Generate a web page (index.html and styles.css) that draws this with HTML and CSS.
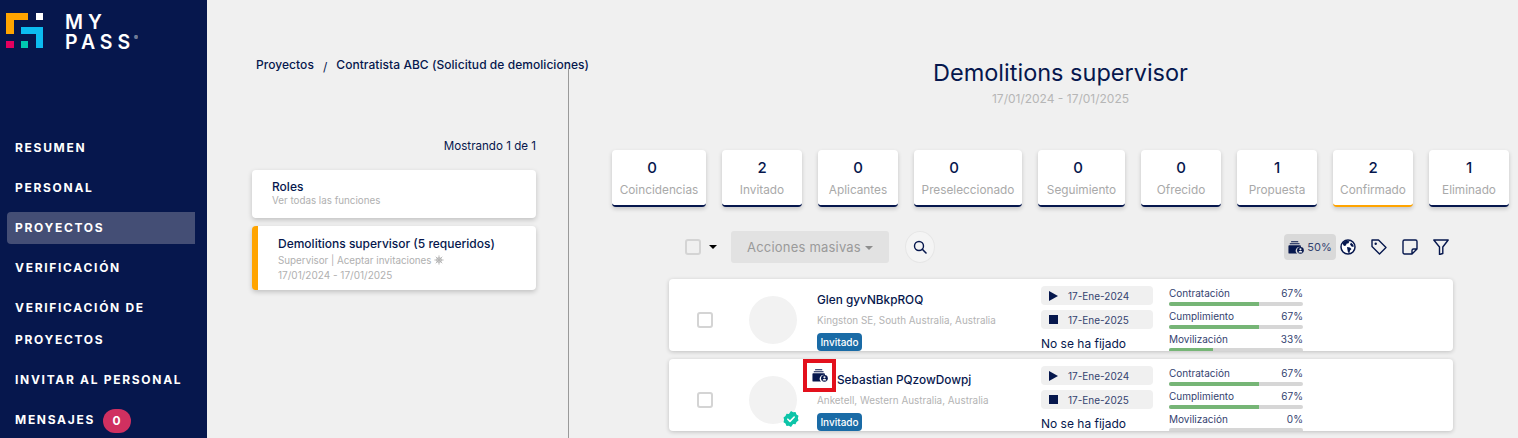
FILE: index.html
```html
<!DOCTYPE html>
<html lang="es">
<head>
<meta charset="utf-8">
<title>MyPass</title>
<link rel="stylesheet" href="styles.css">
</head>
<body>
<svg class="defs" width="0" height="0" aria-hidden="true">
  <symbol id="wallet" viewBox="0 0 18 14">
    <path d="M3.500 0h8v1.200h-8zM2 2.200h11v1.200H2z" fill="#06174d"/>
    <path d="M0.500 5.400a1 1 0 0 1 1-1h12a1 1 0 0 1 1 1v1.300a4.200 4.200 0 0 0-4.300 7.100H1.500a1 1 0 0 1-1-1z" fill="#06174d"/>
    <circle cx="14" cy="10.200" r="3.800" fill="#06174d"/>
    <circle cx="14" cy="9" r="1.200" fill="#f0f0f0"/>
    <path d="M11.800 12.700a2.200 2 0 0 1 4.400 0z" fill="#f0f0f0"/>
  </symbol>
</svg>
<div class="app">
  <aside class="sidebar">
    <div class="brand">
      <svg class="logo" viewBox="0 0 37 35" aria-hidden="true">
        <path d="M0 0h22v7H8v14H0z" fill="#ffa400"/>
        <rect x="30" y="0" width="7" height="7" fill="#fff"/>
        <path d="M15 14h22v21h-7V21H15z" fill="#0cbcf0"/>
        <rect x="0" y="28" width="8" height="7" fill="#e4005f"/>
        <rect x="15" y="28" width="7" height="7" fill="#00c9b1"/>
      </svg>
      <div class="wordmark"><span>MY</span><span>PASS<sup>®</sup></span></div>
    </div>
    <nav class="nav">
      <a class="nav-item">RESUMEN</a>
      <a class="nav-item">PERSONAL</a>
      <a class="nav-item active">PROYECTOS</a>
      <a class="nav-item">VERIFICACIÓN</a>
      <a class="nav-item">VERIFICACIÓN DE<br>PROYECTOS</a>
      <a class="nav-item">INVITAR AL PERSONAL</a>
      <a class="nav-item">MENSAJES <span class="count">0</span></a>
    </nav>
  </aside>

  <main class="content">
    <section class="left">
      <div class="crumbs"><span>Proyectos</span><span class="sep">/</span><span>Contratista ABC (Solicitud de demoliciones)</span></div>
      <div class="left-body">
        <p class="showing">Mostrando 1 de 1</p>
        <div class="role-card roles">
          <h3>Roles</h3>
          <p>Ver todas las funciones</p>
        </div>
        <div class="role-card selected">
          <h3>Demolitions supervisor (5 requeridos)</h3>
          <p class="meta">Supervisor | Aceptar invitaciones
            <svg class="gear" viewBox="0 0 12 12" aria-hidden="true"><circle cx="6" cy="6" r="2.600" fill="none" stroke="#b5b5b5" stroke-width="1.400"/><path d="M6 0.500v11M0.500 6h11M2.100 2.100l7.800 7.800M9.900 2.100l-7.800 7.800" stroke="#b5b5b5" stroke-width="1.100"/></svg>
          </p>
          <p>17/01/2024 - 17/01/2025</p>
        </div>
      </div>
    </section>

    <section class="right">
      <header class="head">
        <h1>Demolitions supervisor</h1>
        <p>17/01/2024 - 17/01/2025</p>
      </header>

      <div class="stats">
        <div class="stat"><b>0</b><span>Coincidencias</span></div>
        <div class="stat"><b>2</b><span>Invitado</span></div>
        <div class="stat"><b>0</b><span>Aplicantes</span></div>
        <div class="stat"><b>0</b><span>Preseleccionado</span></div>
        <div class="stat"><b>0</b><span>Seguimiento</span></div>
        <div class="stat"><b>0</b><span>Ofrecido</span></div>
        <div class="stat"><b>1</b><span>Propuesta</span></div>
        <div class="stat current"><b>2</b><span>Confirmado</span></div>
        <div class="stat"><b>1</b><span>Eliminado</span></div>
      </div>

      <div class="toolbar">
        <span class="check"></span>
        <span class="caret dark"></span>
        <div class="bulk">Acciones masivas<span class="caret grey"></span></div>
        <div class="search">
          <svg viewBox="0 0 14 14" aria-hidden="true"><circle cx="6" cy="6" r="4.500" fill="none" stroke="#06174d" stroke-width="1.400"/><path d="M9.300 9.300L13 13" stroke="#06174d" stroke-width="1.600" stroke-linecap="round"/></svg>
        </div>
        <div class="tools">
          <div class="pct"><svg class="wallet"><use href="#wallet"/></svg>50%</div>
          <svg class="tool" viewBox="0 0 16 16" aria-hidden="true"><circle cx="8" cy="8" r="7" fill="#fff" stroke="#06174d" stroke-width="1.500"/><path d="M3 3.500l3-1.800 3.500.5-1 2-2 .5-.5 1.800-2 .5-1-1.500zM7 8l3 .5 1.500 1.500-1.500 1.500-.5 2.500-1.500-.5-.5-2.500zM11 3.500l2.500 2.500v2l-2-.5-1.500-2z" fill="#06174d"/></svg>
          <svg class="tool" viewBox="0 0 16 16" aria-hidden="true"><path d="M1 1h6.500L15 8.500 8.500 15 1 7.500z" fill="none" stroke="#06174d" stroke-width="1.400" stroke-linejoin="round"/><circle cx="4.700" cy="4.700" r="1.200" fill="#06174d"/></svg>
          <svg class="tool" viewBox="0 0 16 16" aria-hidden="true"><path d="M10 15H2.500A1.500 1.500 0 0 1 1 13.500v-11A1.500 1.500 0 0 1 2.500 1h11A1.500 1.500 0 0 1 15 2.500V10zM10 15v-3.500a1.500 1.500 0 0 1 1.500-1.500H15" fill="none" stroke="#06174d" stroke-width="1.400" stroke-linejoin="round"/></svg>
          <svg class="tool" viewBox="0 0 16 16" aria-hidden="true"><path d="M0.800 1h14.400L9.800 8v6.500l-3.300 1V8z" fill="none" stroke="#06174d" stroke-width="1.400" stroke-linejoin="round"/></svg>
        </div>
      </div>

      <div class="rows">
        <article class="row">
          <span class="check"></span>
          <div class="avatar"></div>
          <div class="who">
            <h4>Glen gyvNBkpROQ</h4>
            <p>Kingston SE, South Australia, Australia</p>
            <span class="badge">Invitado</span>
          </div>
          <div class="dates">
            <div class="date"><i class="play"></i>17-Ene-2024</div>
            <div class="date"><i class="stop"></i>17-Ene-2025</div>
            <div class="unset">No se ha fijado</div>
          </div>
          <div class="bars">
            <div class="metric"><div class="metric-top"><span>Contratación</span><span>67%</span></div><div class="track"><div class="fill" style="width:67%"></div></div></div>
            <div class="metric"><div class="metric-top"><span>Cumplimiento</span><span>67%</span></div><div class="track"><div class="fill" style="width:67%"></div></div></div>
            <div class="metric"><div class="metric-top"><span>Movilización</span><span>33%</span></div><div class="track"><div class="fill" style="width:33%"></div></div></div>
          </div>
        </article>

        <article class="row">
          <span class="check"></span>
          <div class="avatar">
            <svg class="verified" viewBox="0 0 16 16" aria-hidden="true"><path d="M8 0l2.100 1.300 2.400-.2 1 2.300 2 1.400-.6 2.400.6 2.400-2 1.400-1 2.300-2.400-.2L8 16l-2.100-1.300-2.400.2-1-2.300-2-1.400.6-2.400L.5 6.400l2-1.400 1-2.300 2.400.2z" fill="#0cc4a8"/><path d="M4.800 8.200l2.200 2.200 4.200-4.400" fill="none" stroke="#fff" stroke-width="1.600" stroke-linecap="round" stroke-linejoin="round"/></svg>
          </div>
          <div class="who">
            <h4 class="flagged"><span class="marker"><svg class="wallet"><use href="#wallet"/></svg></span>Sebastian PQzowDowpj</h4>
            <p>Anketell, Western Australia, Australia</p>
            <span class="badge">Invitado</span>
          </div>
          <div class="dates">
            <div class="date"><i class="play"></i>17-Ene-2024</div>
            <div class="date"><i class="stop"></i>17-Ene-2025</div>
            <div class="unset">No se ha fijado</div>
          </div>
          <div class="bars">
            <div class="metric"><div class="metric-top"><span>Contratación</span><span>67%</span></div><div class="track"><div class="fill" style="width:67%"></div></div></div>
            <div class="metric"><div class="metric-top"><span>Cumplimiento</span><span>67%</span></div><div class="track"><div class="fill" style="width:67%"></div></div></div>
            <div class="metric"><div class="metric-top"><span>Movilización</span><span>0%</span></div><div class="track"><div class="fill" style="width:0%"></div></div></div>
          </div>
        </article>
      </div>
    </section>
  </main>
</div>
</body>
</html>
```

FILE: styles.css
```css
* { box-sizing: border-box; }
html, body { margin: 0; height: 438px; overflow: hidden; }
body { font-family: Inter, "Noto Sans", sans-serif; color: #06174d; background: #f0f0f0; }
h1, h3, h4, p { margin: 0; font-weight: 400; }
.defs { position: absolute; }

.app { display: flex; height: 438px; }

/* Sidebar */
.sidebar { width: 207px; flex: none; background: #06174d; padding: 13px 0 0 7px; color: #fff; }
.brand { display: flex; align-items: flex-start; margin-left: -1px; height: 119px; }
.logo { width: 37px; height: 35px; display: block; }
.wordmark { display: flex; flex-direction: column; margin: -1px 0 0 22px; font-size: 19.500px; line-height: 20px; font-weight: 600; letter-spacing: 4.900px; }
.wordmark sup { font-size: 6px; letter-spacing: 0; vertical-align: 9px; line-height: 0; opacity: .7; margin-left: -1px; }
.nav { display: flex; flex-direction: column; gap: 8px; }
.nav-item { width: 188px; padding: 0 8px; font-size: 12px; line-height: 32px; font-weight: 700; letter-spacing: 1.7px; white-space: nowrap; border-radius: 4px 0 0 4px; }
.nav-item.active { background: #444e75; }
.count { display: inline-block; width: 28px; height: 24px; margin-left: 3px; border-radius: 12px; background: #d03060; font-size: 12px; line-height: 24px; letter-spacing: 0; text-align: center; vertical-align: middle; }

/* Main */
.content { flex: 1; display: flex; min-width: 0; }
.left { width: 362px; flex: none; padding-top: 58px; }
.crumbs { height: 10px; padding-left: 49px; display: flex; font-size: 12px; line-height: 14px; font-weight: 500; letter-spacing: .05px; white-space: nowrap; }
.sep { margin: 0 9px; font-weight: 400; position: relative; top: 2px; }
.left-body { height: 370px; border-right: 1px solid #9a9a9a; padding: 70px 32px 0 45px; }
.showing { text-align: right; font-size: 11.600px; line-height: 16px; margin-bottom: 16px; }
.role-card { background: #fff; border-radius: 4px; box-shadow: 0 2px 5px rgba(0,0,0,.2); margin-bottom: 8px; }
.role-card h3 { font-size: 12px; line-height: 14px; font-weight: 500; }
.role-card p { font-size: 10px; line-height: 14px; color: #b0b0b0; }
.roles { height: 48px; padding: 10px 20px; }
.roles p { line-height: 13px; font-size: 9.800px; }
.selected { height: 64px; padding: 10px 20px; border-left: 6px solid #ffa400; }
.selected h3 { line-height: 16px; margin-bottom: 2px; }
.selected .meta { font-size: 9.800px; }
.gear { width: 10px; height: 10px; vertical-align: -1px; }

.right { flex: 1; min-width: 0; padding: 58px 9px 0 43px; }
.head { text-align: center; height: 92px; }
.head h1 { font-size: 23.500px; line-height: 30px; }
.head p { font-size: 12px; line-height: 14px; color: #b6b6b6; margin-top: 4px; }

.stats { display: grid; grid-template-columns: 94px 80px 80px 108px 87px 80px 80px 80px 80px; gap: 16px; }
.stat { height: 57px; background: #fff; border-radius: 4px; border-bottom: 2px solid #06174d; box-shadow: 0 2px 4px rgba(0,0,0,.18); display: flex; flex-direction: column; align-items: center; padding-top: 9px; }
.stat b { align-self: flex-start; width: 80px; text-align: center; font-size: 15px; line-height: 18px; font-weight: 500; }
.stat span { font-size: 11.800px; line-height: 16px; margin-top: 5px; color: #a9a9a9; white-space: nowrap; }
.stat.current { border-bottom-color: #ffa400; }

.check { display: block; width: 16px; height: 16px; flex: none; border: 2px solid #d4d4d4; border-radius: 3px; background: #f0f0f0; }
.caret { display: inline-block; border: 4px solid transparent; border-top-color: currentColor; border-bottom: 0; }
.caret.dark { color: #000; margin-left: 8px; }
.caret.grey { color: #8e8e8e; margin-left: 4px; vertical-align: 2px; }

.toolbar { display: flex; align-items: center; height: 32px; margin: 24px 60px 0 73px; }
.bulk { margin-left: 14px; width: 158px; height: 32px; background: #e2e2e2; border-radius: 3px; font-size: 13px; line-height: 32px; text-align: center; color: #9a9a9a; letter-spacing: .2px; }
.search { margin-left: 16px; width: 30px; height: 32px; border-radius: 50%; background: #f4f4f4; border: 1px solid #e6e6e6; display: flex; align-items: center; justify-content: center; }
.search svg { width: 14px; height: 14px; }
.tools { margin-left: auto; display: flex; align-items: center; gap: 15px; }
.pct { width: 52px; height: 26px; margin-right: -11px; background: #d9d9d9; border-radius: 4px; display: flex; align-items: center; justify-content: center; gap: 3px; font-size: 11px; color: #33426f; }
.wallet { width: 16px; height: 13px; display: block; }
.tool { width: 16px; height: 16px; display: block; }

.rows { margin: 16px 56px 0 57px; display: flex; flex-direction: column; gap: 8px; }
.row { height: 72px; background: #fff; border-radius: 4px; box-shadow: 0 1px 4px rgba(0,0,0,.2); display: flex; overflow: hidden; padding-left: 28px; align-items: flex-start; }
.row > .check { margin-top: 33px; background: #fff; }
.avatar { position: relative; width: 48px; height: 48px; margin: 17px 0 0 36px; border-radius: 50%; background: #f2f2f2; flex: none; }
.verified { position: absolute; right: -2px; bottom: -3px; width: 16px; height: 16px; }
.who { width: 224px; margin-left: 20px; padding-top: 14px; flex: none; }
.who h4 { font-size: 11.800px; line-height: 14px; font-weight: 500; white-space: nowrap; }
.who p { margin-top: 6px; font-size: 9.900px; line-height: 14px; color: #b3b3b3; white-space: nowrap; }
.who .badge { display: inline-block; margin-top: 6px; width: 45px; height: 18px; background: #1a6ba6; border-radius: 4px; color: #fff; font-size: 10px; line-height: 18px; text-align: center; font-weight: 500; }
.flagged { position: relative; padding-left: 20px; }
.marker { position: absolute; left: -14px; top: -14px; width: 33px; height: 33px; border: 4px solid #e3101c; display: flex; align-items: center; justify-content: center; }
.dates { width: 112px; margin-left: 0; padding-top: 7px; flex: none; }
.date { height: 19px; margin-bottom: 5px; background: #f0f0f0; border-radius: 4px; display: flex; align-items: center; padding-left: 8px; font-size: 10px; color: #33426f; }
.date i { display: block; margin-right: 10px; flex: none; }
.play { width: 0; height: 0; border-left: 9px solid #06174d; border-top: 5px solid transparent; border-bottom: 5px solid transparent; }
.stop { width: 9px; height: 9px; background: #06174d; margin-right: 10px; }
.unset { margin-top: 8px; font-size: 12px; line-height: 14px; }
.bars { width: 134px; margin-left: 16px; padding-top: 8px; flex: none; }
.metric { height: 23px; }
.metric-top { display: flex; justify-content: space-between; font-size: 10px; line-height: 13px; color: #33426f; }
.track { height: 4px; margin-top: 2px; background: #d6d6d6; border-radius: 2px; overflow: hidden; }
.fill { height: 100%; background: #76b576; }
```
